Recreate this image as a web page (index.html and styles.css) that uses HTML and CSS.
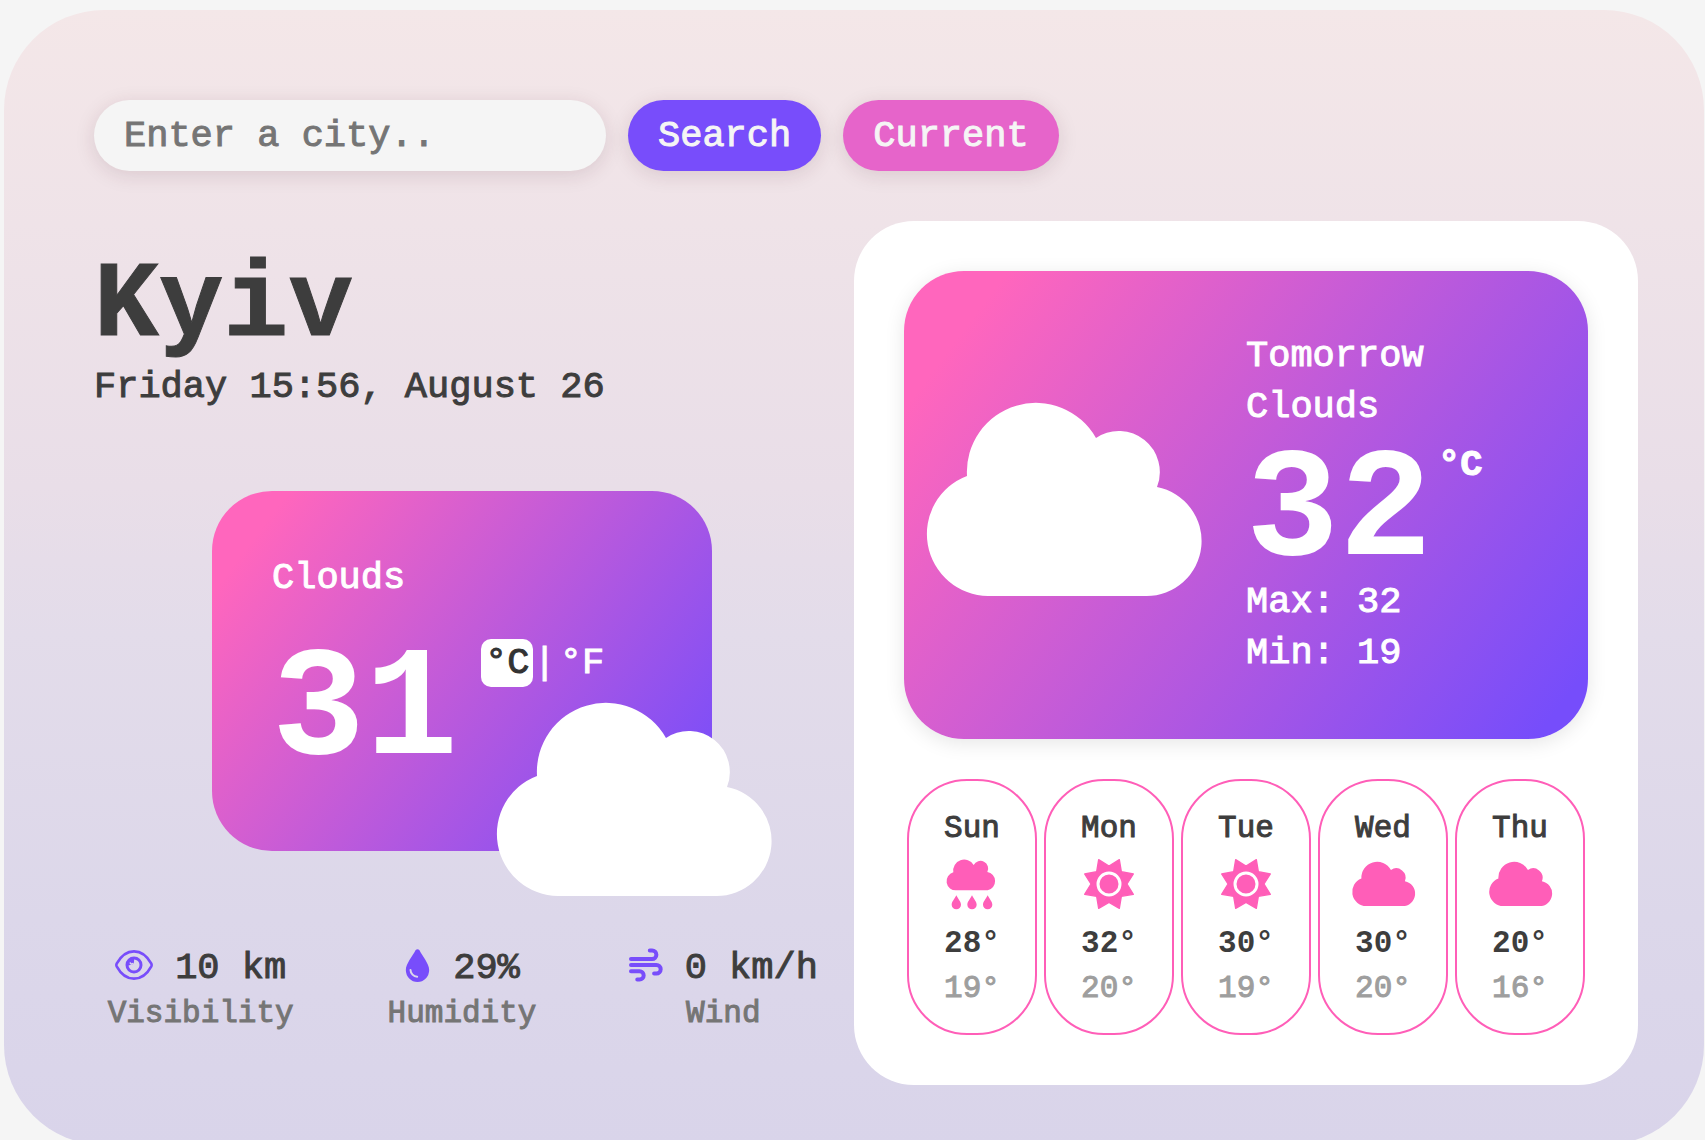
FILE: index.html
```html
<!DOCTYPE html>
<html lang="en">
<head>
<meta charset="utf-8">
<title>Weather</title>
<link rel="stylesheet" href="styles.css">
</head>
<body>
<svg class="sprite" aria-hidden="true">
  <symbol id="cloud" viewBox="0 0 275 193">
    <path d="M62 193A62 62 0 0 1 41 73A69 69 0 0 1 170 35A41 41 0 0 1 231 84A55 55 0 0 1 220 193Z"/>
  </symbol>
  <symbol id="rain" viewBox="0 0 150 150">
    <path d="M28 94A27.5 27.5 0 0 1 19 40A33 33 0 0 1 80 18A23 23 0 0 1 121 39A28 28 0 0 1 122 94Z"/>
    <path d="M28 109C33 120 42 128 42 137A14 14 0 0 1 14 137C14 128 23 120 28 109ZM75 109C80 120 89 128 89 137A14 14 0 0 1 61 137C61 128 70 120 75 109ZM122 109C127 120 136 128 136 137A14 14 0 0 1 108 137C108 128 117 120 122 109Z"/>
  </symbol>
  <symbol id="sun" viewBox="0 0 150 150">
    <path fill-rule="evenodd" stroke="currentColor" stroke-width="4" stroke-linejoin="round" d="M44 2L75 21L106 2L112 38L148 45L129 75L148 106L112 112L106 148L75 130L44 148L38 112L2 106L21 75L2 45L38 38Z"/>
    <circle cx="75" cy="75" r="33" fill="none" stroke="#fff" stroke-width="9"/>
  </symbol>
  <symbol id="eye" viewBox="0 0 114 90">
    <path fill="none" stroke="currentColor" stroke-width="8" d="M5 41C16 21 33 4 57 4S98 21 109 41Q111 45 109 49C98 69 81 86 57 86S16 69 5 49Q3 45 5 41Z"/>
    <circle cx="57" cy="45" r="21" fill="none" stroke="currentColor" stroke-width="9"/>
    <path d="M36 45A21 21 0 0 1 57 24C58 36 57 45 48 45C43 45 36 50 36 45Z"/>
    <path fill="none" stroke="#dcd6ea" stroke-width="5" stroke-linecap="round" d="M46 39Q48 44 53 41"/>
  </symbol>
  <symbol id="drop" viewBox="0 0 72 99">
    <path d="M30 4Q36 -3 42 4C50 21 71 44 71 63A35 36 0 0 1 1 63C1 44 22 21 30 4Z"/>
    <path fill="none" stroke="#dcd6ea" stroke-width="6" stroke-linecap="round" d="M15 63A21 21 0 0 0 35 83"/>
  </symbol>
  <symbol id="wind" viewBox="0 0 103 102">
    <path fill="none" stroke="currentColor" stroke-width="12" stroke-linecap="round" d="M6 33H70A13 13 0 0 0 70 7H63M6 51H83A13 13 0 0 1 83 77H76M6 70H32A12 12 0 0 1 32 95H25"/>
  </symbol>
</svg>
<main class="app">
  <form class="search">
    <input class="search-input" type="text" placeholder="Enter a city.." aria-label="City">
    <button class="button" type="button">Search</button>
    <button class="button button-pink" type="button">Current</button>
  </form>
  <div class="columns">
    <section class="today">
      <h1 class="city">Kyiv</h1>
      <p class="date">Friday 15:56, August 26</p>
      <div class="now gradient">
        <p class="now-sky">Clouds</p>
        <div class="now-temp">
          <strong class="big">31</strong>
          <div class="units"><a class="unit unit-active" href="#c">°C</a><span>|</span><a class="unit" href="#f">°F</a></div>
        </div>
        <svg class="cloud now-cloud"><use href="#cloud"/></svg>
      </div>
      <div class="stats">
        <div class="stat">
          <p class="stat-value"><svg class="eye"><use href="#eye"/></svg>10 km</p>
          <p class="stat-label">Visibility</p>
        </div>
        <div class="stat">
          <p class="stat-value"><svg class="drop"><use href="#drop"/></svg>29%</p>
          <p class="stat-label">Humidity</p>
        </div>
        <div class="stat">
          <p class="stat-value"><svg class="wind"><use href="#wind"/></svg>0 km/h</p>
          <p class="stat-label">Wind</p>
        </div>
      </div>
    </section>
    <section class="forecast">
      <div class="tomorrow gradient">
        <div class="tomorrow-icon"><svg class="cloud"><use href="#cloud"/></svg></div>
        <div class="tomorrow-text">
          <p>Tomorrow</p>
          <p>Clouds</p>
          <div class="tomorrow-temp"><strong class="big">32</strong><strong class="degree">°C</strong></div>
          <p>Max: 32</p>
          <p>Min: 19</p>
        </div>
      </div>
      <div class="days">
        <article class="day"><h2 class="day-name">Sun</h2><svg class="day-icon"><use href="#rain"/></svg><p class="high">28°</p><p class="low">19°</p></article>
        <article class="day"><h2 class="day-name">Mon</h2><svg class="day-icon"><use href="#sun"/></svg><p class="high">32°</p><p class="low">20°</p></article>
        <article class="day"><h2 class="day-name">Tue</h2><svg class="day-icon"><use href="#sun"/></svg><p class="high">30°</p><p class="low">19°</p></article>
        <article class="day"><h2 class="day-name">Wed</h2><svg class="day-icon day-cloud"><use href="#cloud"/></svg><p class="high">30°</p><p class="low">20°</p></article>
        <article class="day"><h2 class="day-name">Thu</h2><svg class="day-icon day-cloud"><use href="#cloud"/></svg><p class="high">20°</p><p class="low">16°</p></article>
      </div>
    </section>
  </div>
</main>
</body>
</html>
```
FILE: styles.css
```css
* { box-sizing: border-box; }

body {
  margin: 0;
  height: 100vh;
  overflow: hidden;
  padding: 10px 1px 0 4px;
  background: #f5f5f5;
  color: #3d3d3d;
  font-family: "Liberation Mono", monospace;
  font-size: 37px;
  line-height: 50px;
  -webkit-text-stroke: 1px currentColor;
}

h1, h2, p { margin: 0; }
svg, symbol { overflow: visible; }
svg { display: block; fill: currentColor; flex: none; }
.sprite { position: absolute; width: 0; height: 0; overflow: hidden; }

.app {
  padding: 90px 66px 60px;
  border-radius: 100px;
  background: linear-gradient(#f4e7e8 0%, #e9dee8 42%, #e3dcea 55%, #dcd7ea 80%, #d9d4ea 100%);
}

.search { display: flex; gap: 22px; padding: 0 24px; margin-bottom: 50px; }
.search-input, .button {
  height: 71px;
  border: 0;
  border-radius: 36px;
  padding: 0 30px;
  font: inherit;
  -webkit-text-stroke: inherit;
  box-shadow: 0 4px 20px rgba(70, 20, 40, 0.13);
}
.search-input { width: 512px; background: #f5f5f5; color: #3d3d3d; }
.search-input::placeholder { color: #757575; opacity: 1; }
.button { background: #784dfb; color: #f5f5f5; }
.button-pink { background: #e664ca; }

.columns { display: grid; grid-template-columns: 1fr 1fr; }

.today { padding-top: 28px; }
.city {
  padding: 0 24px;
  font-size: 108px;
  line-height: 114px;
}
.date { padding: 0 24px; line-height: 48px; }

.gradient {
  border-radius: 60px;
  color: #fff;
  background: linear-gradient(127deg, #ff66bd 10%, #764dfb 95%);
}
.big { font-size: 155px; -webkit-text-stroke-width: 0; }
.cloud { width: 275px; height: 193px; }

.now {
  position: relative;
  width: 500px;
  min-height: 360px;
  margin: 80px auto 91px;
  padding: 60px 60px 40px;
}
.now-sky { line-height: 54px; }
.now-temp { display: flex; gap: 23px; margin-top: 17px; line-height: 180px; }
.units { display: flex; align-items: flex-start; padding-top: 17px; line-height: 48px; }
.unit { padding: 0 4px; color: #fff; text-decoration: none; }
.unit-active { background: #fff; color: #333; border-radius: 10px; }
.now-cloud { position: absolute; right: -59px; bottom: -45px; }

.stats { display: grid; grid-template-columns: repeat(3, 1fr); }
.stat-value { display: flex; justify-content: center; align-items: center; gap: 22px; line-height: 52px; }
.stat-value svg { margin-bottom: 6px; color: #784dfb; }
.eye { width: 38px; height: 30px; }
.drop { width: 27px; height: 33px; }
.wind { width: 34px; height: 34px; }
.stat-label { color: #757575; font-size: 31px; line-height: 40px; text-align: center; }

.forecast { padding: 50px; border-radius: 60px; background: #fff; }
.tomorrow {
  display: grid;
  grid-template-columns: 1fr 1fr;
  align-items: center;
  min-height: 468px;
  box-shadow: 0 4px 20px rgba(0, 0, 0, 0.1);
  line-height: 51px;
}
.tomorrow-icon { display: flex; justify-content: center; padding: 0 24px 12px 0; }
.tomorrow-temp { display: flex; gap: 6px; margin-top: 6px; }
.tomorrow-temp .big { padding-top: 10px; line-height: 128px; }
.degree { line-height: 52px; }

.days { display: grid; grid-template-columns: repeat(5, 1fr); gap: 7px; padding: 0 3px; margin-top: 40px; }
.day {
  display: flex;
  flex-direction: column;
  align-items: center;
  padding: 28px 0 22px;
  border: 2px solid #ff5eb8;
  border-radius: 60px;
  font-size: 31px;
  line-height: 45px;
}
.day-name { font-size: 31px; font-weight: 400; line-height: 40px; }
.day-icon { width: 50px; height: 50px; margin: 10px 0 12px; color: #ff5eb8; }
.day-cloud { width: 63px; }
.high { font-weight: 700; -webkit-text-stroke-width: 0; }
.low { color: #9e9e9e; }
```
